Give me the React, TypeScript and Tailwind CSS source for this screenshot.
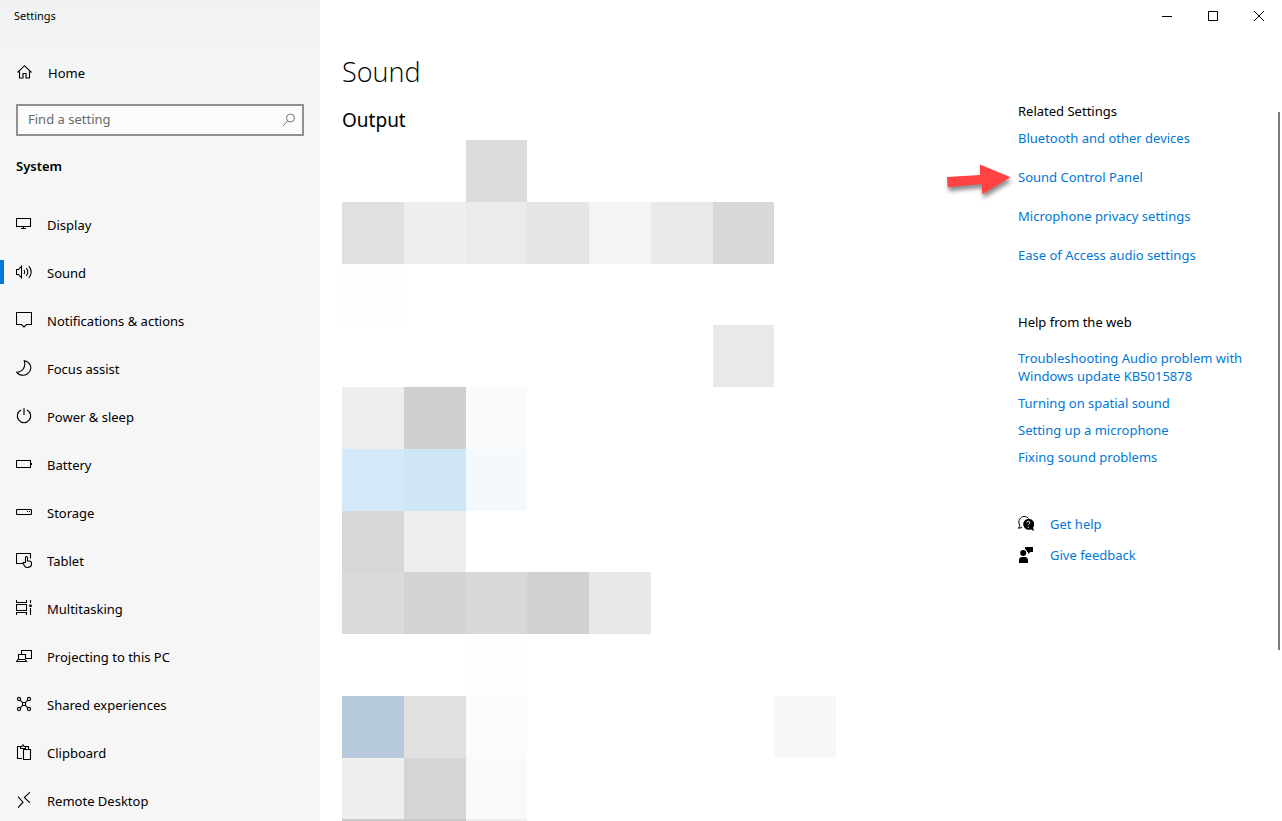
import React from "react";

const icons: Record<string, React.ReactNode> = {
  home: <path d="M3.5 7.5V14H7V9.5h3V14h3.5V7.5M1.5 8.5l7-6.800 7 6.800" />,
  display: <path d="M.5 2.5h14v8H.5zM7.5 10.5v2M5 12.5h5" />,
  sound: (
    <>
      <path d="M.5 5.5h2l3-3.3v11.6l-3-3.3h-2z" />
      <path d="M8 6q1.4 2 0 4M10.3 4.2q3 3.8 0 7.6M12.8 2.2q4.8 5.8 0 11.6" />
    </>
  ),
  notifications: <path d="M.5.5h15v12h-5L8 15l-2.5-2.5h-5z" />,
  focus: <path d="M8.3.8C10 6.5 7 12 .8 12.3c3 4 9.5 4 12.7-.5 3-4.5.5-10-5.2-11z" />,
  power: <path d="M8 0v7M5 2a6.7 6.7 0 1 0 6 0" />,
  battery: <path d="M.5 4.5h14v7H.5zM15.5 7v2" />,
  storage: <path d="M1 5.5h14l.5.5v4l-.5.5H1l-.5-.5V6zM11 7.5h1M13 7.5h1" />,
  tablet: (
    <>
      <path d="M7 11.5H.5v-10h14v5" />
      <path d="M9.5 11V5.5q0-1 1-1t1 1V9h2q2 .3 2 2v1c0 4-6 4.5-7.3 1.5L7 11q.7-1.5 2.5 0" />
    </>
  ),
  multitasking: (
    <>
      <path d="M.5 0v2.5h10V0M.5 4.5h10v6H.5zM.5 15v-2.5h10V15M14.5 0v3M14.5 8v7" />
      <path d="M13.3 4.5h2.4v2.4h-2.4z" fill="currentColor" stroke="none" />
    </>
  ),
  projecting: <path d="M5.5 6V2.5h10v8H10M2.5 11V6.5h7V11M.5 13.5 2 11.5h7l1.5 2z" />,
  shared: (
    <>
      <circle cx="3" cy="3" r="1.6" />
      <circle cx="13" cy="3" r="1.6" />
      <circle cx="3" cy="13" r="1.6" />
      <circle cx="13" cy="13" r="1.6" />
      <path d="m4.2 4.2 2.5 2.5M11.8 4.2 9.3 6.7M4.2 11.8l2.5-2.5M11.8 11.8 9.3 9.3M6.5 6.5h3v3h-3z" />
    </>
  ),
  clipboard: <path d="M6 14.5H1.500v-12H4M10 2.500h2.500V5M4.500 4.500v-2H6q1-3.500 2 0h1.500v2zM7.500 5.500h7v10h-7z" />,
  remote: <path d="m2 4.7 5 5.500-5 5.500M14 .2 8.300 5.500l5.700 5.300" />,
};

function Icon({ name }: { name: string }) {
  return (
    <svg viewBox="0 0 16 16" className="size-4 shrink-0" fill="none" stroke="currentColor" strokeWidth="1.1" aria-hidden="true">
      {icons[name]}
    </svg>
  );
}

const navItems = [
  { icon: "display", label: "Display" },
  { icon: "sound", label: "Sound" },
  { icon: "notifications", label: "Notifications & actions" },
  { icon: "focus", label: "Focus assist" },
  { icon: "power", label: "Power & sleep" },
  { icon: "battery", label: "Battery" },
  { icon: "storage", label: "Storage" },
  { icon: "tablet", label: "Tablet" },
  { icon: "multitasking", label: "Multitasking" },
  { icon: "projecting", label: "Projecting to this PC" },
  { icon: "shared", label: "Shared experiences" },
  { icon: "clipboard", label: "Clipboard" },
  { icon: "remote", label: "Remote Desktop" },
];

const W = "bg-white";
const mosaic: string[][] = [
  [W, W, "bg-[#dbdbdb]", W, W, W, W, W],
  ["bg-[#e0e0e0]", "bg-[#eeeeee]", "bg-[#ebebeb]", "bg-[#e4e4e4]", "bg-[#f4f4f4]", "bg-[#e9e9e9]", "bg-[#d8d8d8]", W],
  ["bg-[#fefefe]", W, W, W, W, W, W, W],
  [W, W, W, W, W, W, "bg-[#e9e9e9]", W],
  ["bg-[#eeeeee]", "bg-[#cfcfcf]", "bg-[#fafafa]", W, W, W, W, W],
  ["bg-[#d6e9f8]", "bg-[#cee6f6]", "bg-[#f4f9fe]", W, W, W, W, W],
  ["bg-[#d7d7d7]", "bg-[#ededed]", W, W, W, W, W, W],
  ["bg-[#dadada]", "bg-[#d3d3d3]", "bg-[#d8d8d8]", "bg-[#d1d1d1]", "bg-[#e8e8e8]", W, W, W],
  [W, W, "bg-[#fefefe]", W, W, W, W, W],
  ["bg-[#b6cadb]", "bg-[#dfe1e0]", "bg-[#fbfbfb]", W, W, W, W, "bg-[#f7f7f7]"],
  ["bg-[#eeeeee]", "bg-[#d5d5d5]", "bg-[#f9f9f9]", W, W, W, W, W],
  ["bg-[#c9c9c9]", "bg-[#c9c9c9]", "bg-[#efefef]", W, W, W, W, W],
];

const related = ["Bluetooth and other devices", "Sound Control Panel", "Microphone privacy settings", "Ease of Access audio settings"];
const help = [
  "Troubleshooting Audio problem with Windows update KB5015878",
  "Turning on spatial sound",
  "Setting up a microphone",
  "Fixing sound problems",
];

function Sidebar() {
  return (
    <aside className="flex w-80 shrink-0 flex-col bg-linear-to-b from-[#eff1f2] from-0% via-[#f4f5f5] via-8% to-[#f6f6f6] to-15%">
      <div className="flex h-8 shrink-0 items-center px-3.5 text-[11px]">Settings</div>
      <a href="#home" className="mt-4 flex h-12 shrink-0 items-center gap-4 pl-4">
        <Icon name="home" />
        <span className="pt-1">Home</span>
      </a>
      <div className="mx-4 mt-2 flex h-8 shrink-0 items-center border-2 border-[#919191] bg-[#fcfcfc] pr-1.5 pl-2.5">
        <input type="search" aria-label="Find a setting" placeholder="Find a setting" className="min-w-0 flex-1 bg-transparent outline-none placeholder:text-[#6a6a6a]" />
        <button type="button" aria-label="Search" className="text-[#777]">
          <svg viewBox="0 0 14 14" className="size-3.5" fill="none" stroke="currentColor" aria-hidden="true">
            <circle cx="8.5" cy="5" r="4" />
            <path d="M5.5 8 1 13" />
          </svg>
        </button>
      </div>
      <h2 className="mt-5 shrink-0 pl-4 leading-5 font-semibold">System</h2>
      <nav className="mt-6 flex flex-col">
        {navItems.map((item) => (
          <a key={item.label} href="#item" className="flex h-12 shrink-0 items-center" aria-current={item.label === "Sound" ? "page" : undefined}>
            <span className={item.label === "Sound" ? "h-6 w-1 bg-[#0078d7]" : "h-6 w-1"} />
            <span className="flex items-center gap-[15px] pl-3">
              <Icon name={item.icon} />
              <span className="pt-1">{item.label}</span>
            </span>
          </a>
        ))}
      </nav>
    </aside>
  );
}

function WindowControls() {
  return (
    <div className="flex h-8 shrink-0 justify-end">
      {[
        { label: "Minimize", d: "M0 5.5h10" },
        { label: "Maximize", d: "M.5.5h9v9h-9z" },
        { label: "Close", d: "m0 0 10 10M10 0 0 10" },
      ].map((c) => (
        <button key={c.label} type="button" aria-label={c.label} className="flex w-[46px] items-center justify-center">
          <svg viewBox="0 0 10 10" className="size-2.5" fill="none" stroke="currentColor" aria-hidden="true">
            <path d={c.d} />
          </svg>
        </button>
      ))}
    </div>
  );
}

function Arrow() {
  return (
    <svg viewBox="0 0 72 44" className="absolute top-1/2 right-full h-11 w-[72px] -translate-y-1/2 drop-shadow-[1px_4px_2px_rgba(0,0,0,0.45)]" aria-hidden="true">
      <path d="M1 22 34 20 34 9.5 64.7 22.3 36.3 39.3 35.7 29 1.7 32.3z" fill="#ff4343" />
    </svg>
  );
}

function RelatedPanel() {
  return (
    <aside className="w-[240px] shrink-0 leading-[18px]">
      <h3>Related Settings</h3>
      <ul className="mt-[9px] flex flex-col gap-[21px] text-[#0078d7]">
        {related.map((label) => (
          <li key={label} className="relative">
            {label === "Sound Control Panel" && <Arrow />}
            <a href="#related">{label}</a>
          </li>
        ))}
      </ul>
      <h3 className="mt-[49px]">Help from the web</h3>
      <ul className="mt-[18px] flex flex-col gap-[9px] text-[#0078d7]">
        {help.map((label) => (
          <li key={label}>
            <a href="#help">{label}</a>
          </li>
        ))}
      </ul>
      <ul className="mt-[49px] flex flex-col gap-[13px]">
        <li className="flex items-center gap-4">
          <svg viewBox="0 0 16 16" className="size-4" aria-hidden="true">
            <path d="M1.8 9.5C-1 4.5 3 .5 6 .5c2 0 3.5.7 4.5 2M1.8 9.5.5 12.300l3.500-.8" fill="none" stroke="#000" />
            <path d="M10.3 2.7a5.500 5.500 0 1 0 2.700 10.500l2.900 2-.8-3.700a5.500 5.500 0 0 0-4.800-8.800z" />
            <path d="M8.8 6.7q.2-1.500 1.500-1.500t1.500 1.500q0 .7-.8 1.200t-.7 1.300M10.300 10.700v1.100" fill="none" stroke="#fff" />
          </svg>
          <a href="#get-help" className="text-[#0078d7]">Get help</a>
        </li>
        <li className="flex items-center gap-4">
          <svg viewBox="0 0 16 16" className="size-4" aria-hidden="true">
            <circle cx="5.2" cy="6" r="3" />
            <path d="M1 16v-2.5q0-3.500 3-3.500h3q3 0 3 3.500V16zM7 0h8v5h-2.500L10 7V5H9Q9 3 7 2z" />
          </svg>
          <a href="#feedback" className="text-[#0078d7]">Give feedback</a>
        </li>
      </ul>
    </aside>
  );
}

export default function App() {
  return (
    <div className="flex h-screen overflow-hidden bg-white font-['Noto_Sans','Open_Sans',sans-serif] text-[13px] text-black">
      <Sidebar />
      <main className="flex min-w-0 flex-1 flex-col">
        <WindowControls />
        <div className="flex min-h-0 flex-1 justify-between pl-[22px]">
          <section className="pt-[22px]">
            <h1 className="font-['Open_Sans',sans-serif] text-[27px] leading-9 font-light">Sound</h1>
            <h2 className="mt-4 text-[19px] leading-7">Output</h2>
            <div className="mt-1.5 grid h-[741px] w-[494px] grid-cols-8 grid-rows-12" aria-hidden="true">
              {mosaic.flat().map((color, i) => (
                <div key={i} className={color} />
              ))}
            </div>
          </section>
          <div className="flex pt-[70px]">
            <RelatedPanel />
            <div className="mt-2.5 mr-0.5 ml-5 h-[538px] w-0.5 bg-[#7a7a7a]" />
          </div>
        </div>
      </main>
    </div>
  );
}
